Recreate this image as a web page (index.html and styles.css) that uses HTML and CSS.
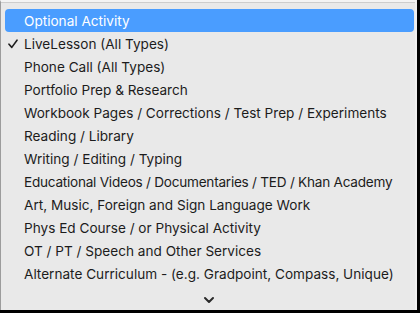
FILE: index.html
```html
<!DOCTYPE html>
<html>
<head>
<meta charset="utf-8">
<link rel="stylesheet" href="styles.css">
</head>
<body>
<div class="menu">
  <ul class="list">
    <li class="item active">Optional Activity</li>
    <li class="item checked"><svg class="check" viewBox="0 0 10 10" width="10" height="10"><path d="M1 5.2 L3.8 8.4 L9 1.2" fill="none" stroke="#1e1e1e" stroke-width="1.6" stroke-linecap="round" stroke-linejoin="round"/></svg>LiveLesson (All Types)</li>
    <li class="item">Phone Call (All Types)</li>
    <li class="item">Portfolio Prep &amp; Research</li>
    <li class="item">Workbook Pages / Corrections / Test Prep / Experiments</li>
    <li class="item">Reading / Library</li>
    <li class="item">Writing / Editing / Typing</li>
    <li class="item tight">Educational Videos / Documentaries / TED / Khan Academy</li>
    <li class="item">Art, Music, Foreign and Sign Language Work</li>
    <li class="item">Phys Ed Course / or Physical Activity</li>
    <li class="item">OT / PT / Speech and Other Services</li>
    <li class="item">Alternate Curriculum - (e.g. Gradpoint, Compass, Unique)</li>
  </ul>
  <div class="more"><svg viewBox="0 0 12 8" width="12" height="8"><path d="M2 2 L6 6 L10 2" fill="none" stroke="#2a2a2a" stroke-width="2" stroke-linecap="round" stroke-linejoin="round"/></svg></div>
</div>
</body>
</html>
```

FILE: styles.css
```css
html, body {
  margin: 0;
  padding: 0;
  background: #000;
  width: 420px;
  height: 313px;
  overflow: hidden;
}

.menu {
  box-sizing: border-box;
  width: 417px;
  height: 310px;
  background: #e9e9e9;
  border-top: 2px solid #f4f4f4;
  border-left: 1px solid #9c9c9c;
  border-right: 2px solid #f0f0f0;
  box-shadow: inset 0 1px 0 #cdcdcd;
  padding: 7px 1px 0 4px;
  font-family: Inter, "Liberation Sans", Arial, sans-serif;
  font-size: 13.6px;
  color: #1c1c1c;
  display: flex;
  flex-direction: column;
}

.list {
  list-style: none;
  margin: 0;
  padding: 0;
}

.item {
  position: relative;
  height: 23px;
  line-height: 22px;
  padding-top: 1px;
  box-sizing: border-box;
  padding-left: 19px;
  border-radius: 4px;
  white-space: nowrap;
}

.item.tight {
  letter-spacing: -0.25px;
}

.item.active {
  background: #4a9dff;
  color: #fff;
}

.check {
  position: absolute;
  left: 3px;
  top: 7px;
}

.more {
  display: flex;
  justify-content: center;
  padding-top: 11px;
  padding-right: 2px;
}
```
